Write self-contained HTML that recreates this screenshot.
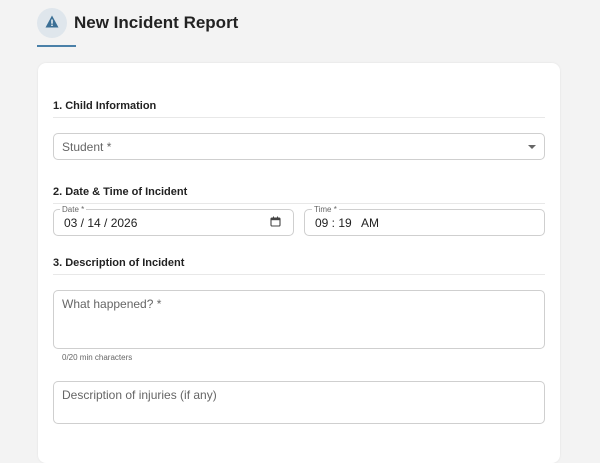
<!DOCTYPE html>
<html><head><meta charset="utf-8"><style>
*{margin:0;padding:0;box-sizing:border-box}
body{width:600px;height:450px;overflow:hidden;background:#f3f3f3;font-family:"Liberation Sans",sans-serif;position:relative;color:#222}
.a{position:absolute}
.card{left:38px;top:63px;width:522px;height:400px;background:#fff;border-radius:8px;box-shadow:0 0 2px rgba(0,0,0,.08)}
.h{font-size:11px;font-weight:bold;color:#222}
.ln{height:1px;background:#e8e8e8;left:53px;width:492px}
.f{border:1px solid #cfcfcf;border-radius:5px;background:#fff}
.ph{font-size:12px;color:#666}
.lb{font-size:8px;color:#666;background:#fff;padding:0 2px}
</style></head><body>
<div class="a" style="left:37px;top:8px;width:30px;height:30px;border-radius:50%;background:#dfe6ec"></div>
<svg class="a" style="left:45px;top:15px" width="14" height="13" viewBox="0 0 14 13"><path d="M7 0.5L13.5 12.5H0.5Z" fill="#3b6f95"/><rect x="6.3" y="4.5" width="1.4" height="4.2" fill="#fff"/><rect x="6.3" y="9.6" width="1.4" height="1.4" fill="#fff"/></svg>
<div class="a" style="left:74px;top:13px;font-size:17px;font-weight:bold;color:#222">New Incident Report</div>
<div class="a" style="left:37px;top:45px;width:39px;height:2px;background:#4a80a8"></div>
<div class="a card"></div>
<div class="a h" style="left:53px;top:100px">1. Child Information</div>
<div class="a ln" style="top:117px"></div>
<div class="a f" style="left:53px;top:133px;width:492px;height:27px"></div>
<div class="a ph" style="left:62px;top:140px">Student *</div>
<div class="a" style="left:528px;top:145px;width:0;height:0;border-left:4px solid transparent;border-right:4px solid transparent;border-top:4px solid #666"></div>
<div class="a h" style="left:53px;top:186px">2. Date &amp; Time of Incident</div>
<div class="a ln" style="top:203px"></div>
<div class="a f" style="left:53px;top:209px;width:241px;height:27px"></div>
<div class="a lb" style="left:60px;top:205px">Date *</div>
<div class="a" style="left:64px;top:216px;font-size:12px;color:#222">03 / 14 / 2026</div>
<svg class="a" style="left:270px;top:216px" width="11" height="11" viewBox="0 0 11 11"><rect x="1" y="2" width="9" height="8" rx="1" fill="none" stroke="#444" stroke-width="1.1"/><rect x="1" y="2" width="9" height="2.2" fill="#444"/><rect x="3" y="0.5" width="1" height="2" fill="#444"/><rect x="7" y="0.5" width="1" height="2" fill="#444"/></svg>
<div class="a f" style="left:304px;top:209px;width:241px;height:27px"></div>
<div class="a lb" style="left:312px;top:205px">Time *</div>
<div class="a" style="left:315px;top:216px;font-size:12px;color:#222">09 : 19 &nbsp; AM</div>
<div class="a h" style="left:53px;top:257px">3. Description of Incident</div>
<div class="a ln" style="top:274px"></div>
<div class="a f" style="left:53px;top:290px;width:492px;height:59px"></div>
<div class="a ph" style="left:62px;top:297px">What happened? *</div>
<div class="a" style="left:62px;top:353px;font-size:8px;color:#666">0/20 min characters</div>
<div class="a f" style="left:53px;top:381px;width:492px;height:43px"></div>
<div class="a ph" style="left:62px;top:388px">Description of injuries (if any)</div>
</body></html>
